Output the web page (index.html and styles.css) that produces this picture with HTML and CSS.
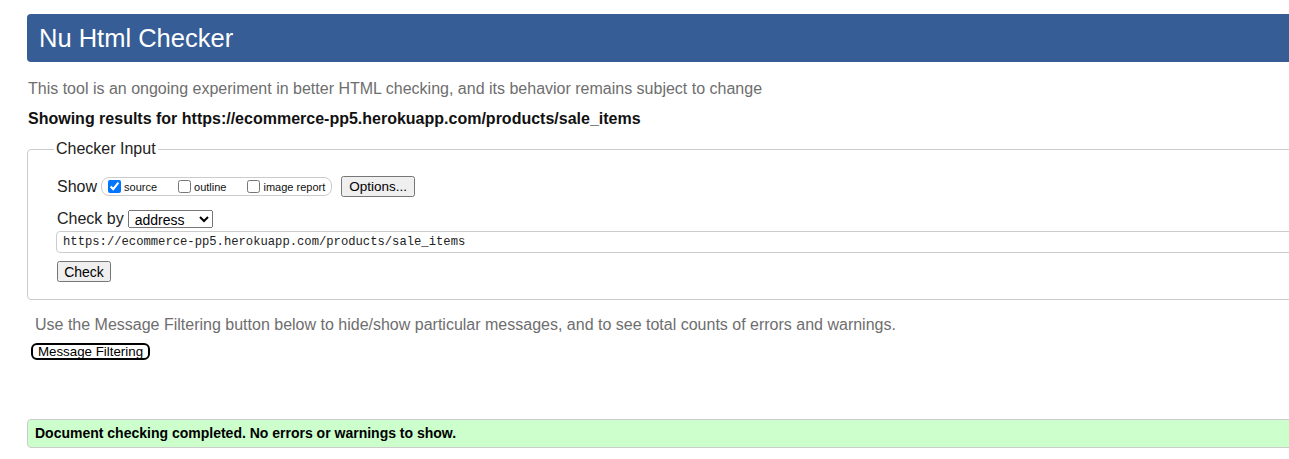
FILE: index.html
```html
<!DOCTYPE html>
<html lang="en">
<head>
<meta charset="utf-8">
<title>Nu Html Checker</title>
<link rel="stylesheet" href="styles.css">
</head>
<body>
<div class="page">
  <h1 class="title">Nu Html Checker</h1>
  <p class="intro">This tool is an ongoing experiment in better HTML checking, and its behavior remains subject to change</p>
  <p class="results">Showing results for https://ecommerce-pp5.herokuapp.com/products/sale_items</p>
  <fieldset class="checker">
    <legend class="legend">Checker Input</legend>
    <div class="row show-row">
      <span class="label">Show</span>
      <span class="group">
        <label class="opt"><input type="checkbox" class="cb" checked>source</label>
        <label class="opt"><input type="checkbox" class="cb">outline</label>
        <label class="opt last"><input type="checkbox" class="cb">image report</label>
      </span>
      <button class="btn options">Options...</button>
    </div>
    <div class="row checkby-row">
      <span class="label">Check by</span>
      <select class="sel"><option>address</option></select>
    </div>
    <input class="url" type="text" value="https://ecommerce-pp5.herokuapp.com/products/sale_items">
    <div class="submit-row"><button class="btn check">Check</button></div>
  </fieldset>
  <p class="filter-note">Use the Message Filtering button below to hide/show particular messages, and to see total counts of errors and warnings.</p>
  <button class="filter-btn">Message Filtering</button>
  <div class="success">Document checking completed. No errors or warnings to show.</div>
</div>
</body>
</html>
```

FILE: styles.css
```css
html {
  overflow: hidden;
  background: #fff;
}
body {
  margin: 0;
  font-family: "Liberation Sans", Arial, sans-serif;
  color: #000;
}
.page {
  width: 1320px;
  padding: 14px 0 0 27px;
}
.title {
  margin: 0;
  height: 48px;
  line-height: 48px;
  padding-left: 12px;
  background: #365d95;
  color: #fff;
  font-weight: normal;
  font-size: 25.5px;
  border-radius: 4px;
}
.intro {
  margin: 17px 0 0 1px;
  font-size: 16px;
  line-height: 20px;
  color: #6e6e6e;
}
.results {
  margin: 10px 0 0 1px;
  font-size: 16px;
  line-height: 20px;
  font-weight: bold;
  color: #111;
}
.checker {
  margin: 10px 0 0 0;
  padding: 0 0 17px 29px;
  border: 1px solid #cccccc;
  border-radius: 4px;
}
.legend {
  margin-left: -3px;
  padding: 0 2px;
  font-size: 16px;
  line-height: 20px;
  color: #222;
}
.row {
  display: flex;
  align-items: center;
}
.show-row {
  margin-top: 17px;
  height: 21px;
}
.label {
  font-size: 16px;
  line-height: 20px;
  color: #222;
}
.group {
  display: flex;
  align-items: center;
  height: 17px;
  margin-left: 4px;
  padding: 0 6px 0 2px;
  border: 1px solid #cccccc;
  border-radius: 8px;
}
.opt {
  display: flex;
  align-items: center;
  font-size: 11px;
  color: #111;
  margin-right: 17px;
}
.opt.last {
  margin-right: 0;
}
.cb {
  width: 13px;
  height: 13px;
  margin: 0 3px 0 4px;
}
.btn {
  font-family: "Liberation Sans", Arial, sans-serif;
  font-size: 13.5px;
  color: #000;
}
.options {
  margin-left: 9px;
  height: 21px;
  padding: 0 6px;
}
.checkby-row {
  margin-top: 12px;
  height: 20px;
}
.sel {
  margin-left: 4px;
  width: 85px;
  height: 18px;
  font-family: "Liberation Sans", Arial, sans-serif;
  font-size: 14px;
  color: #000;
  padding: 0 0 0 2px;
}
.url {
  display: block;
  box-sizing: border-box;
  margin: 2px 0 0 -1px;
  width: 1300px;
  height: 22px;
  padding: 0 0 0 6px;
  border: 1px solid #cccccc;
  border-radius: 4px;
  font-family: "Liberation Mono", "DejaVu Sans Mono", monospace;
  font-size: 12.2px;
  color: #222;
}
.submit-row {
  margin-top: 8px;
}
.check {
  height: 21px;
  width: 54px;
  padding: 0;
  font-size: 14px;
}
.filter-note {
  margin: 15px 0 0 8px;
  font-size: 16px;
  line-height: 20px;
  color: #6e6e6e;
}
.filter-btn {
  display: block;
  margin: 8px 0 0 4px;
  height: 17px;
  width: 119px;
  padding: 0;
  background: #fff;
  border: 2px solid #000;
  border-radius: 6px;
  font-family: "Liberation Sans", Arial, sans-serif;
  font-size: 13.33px;
  line-height: 12px;
  color: #000;
}
.success {
  margin-top: 59px;
  height: 27px;
  line-height: 27px;
  padding-left: 7px;
  background: #ccffcc;
  border: 1px solid #cccccc;
  border-radius: 4px;
  font-size: 14px;
  font-weight: bold;
  color: #000;
}
```
